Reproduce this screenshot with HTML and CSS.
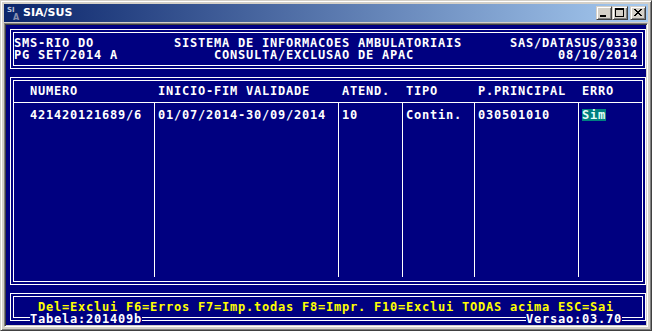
FILE: index.html
```html
<!DOCTYPE html>
<html lang="pt">
<head>
<meta charset="utf-8">
<title>SIA/SUS</title>
<link rel="stylesheet" href="styles.css">
</head>
<body>
<div class="window">
  <div class="titlebar">
    <svg class="app-icon" width="16" height="16" viewBox="0 0 16 16">
      <text x="1" y="7" class="ico-si">SI</text>
      <text x="7" y="15" class="ico-a">A</text>
    </svg>
    <span class="title">SIA/SUS</span>
    <div class="buttons">
      <div class="btn">
        <svg width="14" height="12" viewBox="0 0 14 12" shape-rendering="crispEdges"><rect x="3" y="8" width="6" height="2"/></svg>
      </div>
      <div class="btn">
        <svg width="14" height="12" viewBox="0 0 14 12" shape-rendering="crispEdges"><rect x="2" y="1" width="9" height="2"/><rect x="2" y="1" width="1" height="9"/><rect x="10" y="1" width="1" height="9"/><rect x="2" y="9" width="9" height="1"/></svg>
      </div>
      <div class="btn btn-close">
        <svg width="14" height="12" viewBox="0 0 14 12" shape-rendering="crispEdges">
          <rect x="3" y="2" width="2" height="1"/><rect x="9" y="2" width="2" height="1"/>
          <rect x="4" y="3" width="2" height="1"/><rect x="8" y="3" width="2" height="1"/>
          <rect x="5" y="4" width="4" height="1"/>
          <rect x="6" y="5" width="2" height="1"/>
          <rect x="5" y="6" width="4" height="1"/>
          <rect x="4" y="7" width="2" height="1"/><rect x="8" y="7" width="2" height="1"/>
          <rect x="3" y="8" width="2" height="1"/><rect x="9" y="8" width="2" height="1"/>
        </svg>
      </div>
    </div>
  </div>
  <div class="client">
    <div class="console">
      <section class="box">
        <div class="inner header">
          <span>SMS-RIO DO</span><span class="mid">SISTEMA DE INFORMACOES AMBULATORIAIS</span><span class="right">SAS/DATASUS/0330</span>
          <span>PG SET/2014 A</span><span class="mid">CONSULTA/EXCLUSAO DE APAC</span><span class="right">08/10/2014</span>
        </div>
      </section>
      <section class="box">
        <div class="inner apac">
          <div class="th first">NUMERO</div>
          <div class="th">INICIO-FIM VALIDADE</div>
          <div class="th">ATEND.</div>
          <div class="th">TIPO</div>
          <div class="th">P.PRINCIPAL</div>
          <div class="th">ERRO</div>
          <div class="td first">421420121689/6</div>
          <div class="td">01/07/2014-30/09/2014</div>
          <div class="td">10</div>
          <div class="td">Contin.</div>
          <div class="td">030501010</div>
          <div class="td"><span class="hl">Sim</span></div>
        </div>
      </section>
      <section class="box footer">
        <div class="inner keys">Del=Exclui F6=Erros F7=Imp.todas F8=Impr. F10=Exclui TODAS acima ESC=Sai</div>
        <span class="label label-left">Tabela:201409b</span>
        <span class="label label-right">Versao:03.70</span>
      </section>
    </div>
  </div>
</div>
</body>
</html>
```
FILE: styles.css
```css
* {
  box-sizing: border-box;
  margin: 0;
  padding: 0;
}

html, body {
  width: 652px;
  height: 331px;
  overflow: hidden;
  background: #d4d0c8;
}

.window {
  width: 652px;
  height: 331px;
  background: #d4d0c8;
  border: 1px solid;
  border-color: #d4d0c8 #404040 #404040 #d4d0c8;
  box-shadow: inset 1px 1px 0 #ffffff, inset -1px -1px 0 #808080;
  padding: 3px;
  display: flex;
  flex-direction: column;
}

.titlebar {
  height: 18px;
  flex: none;
  margin-bottom: 1px;
  background: linear-gradient(to right, #0a246a, #a6caf0);
  display: flex;
  align-items: center;
  padding: 0 2px;
}

.app-icon {
  flex: none;
  display: block;
}

.ico-si {
  font: bold 7px "DejaVu Sans", sans-serif;
  fill: #b8c0d8;
}

.ico-a {
  font: bold 8px "DejaVu Sans", sans-serif;
  fill: #8890b0;
}

.title {
  margin-left: 1px;
  color: #ffffff;
  font: bold 11px "DejaVu Sans", sans-serif;
  line-height: 18px;
}

.buttons {
  margin-left: auto;
  display: flex;
}

.btn {
  width: 16px;
  height: 14px;
  background: #d4d0c8;
  border: 1px solid;
  border-color: #d4d0c8 #404040 #404040 #d4d0c8;
  box-shadow: inset 1px 1px 0 #ffffff, inset -1px -1px 0 #808080;
}

.btn svg {
  display: block;
  fill: #000000;
}

.btn-close {
  margin-left: 2px;
}

.client {
  width: 644px;
  height: 304px;
  flex: none;
  border: 1px solid;
  border-color: #808080 #ffffff #ffffff #808080;
  box-shadow: inset 1px 1px 0 #404040, inset -1px -1px 0 #d4d0c8;
  padding: 1px;
}

.console {
  width: 640px;
  height: 300px;
  overflow: hidden;
  background: #000080;
  color: #ffffff;
  font-family: "DejaVu Sans Mono", monospace;
  font-weight: bold;
  font-size: 12px;
  letter-spacing: 0.776px;
  line-height: 12px;
  white-space: nowrap;
  padding: 4px 0 0 4px;
  display: flex;
  flex-direction: column;
  gap: 8px;
}

.box {
  width: 636px;
  flex: none;
  border: 1px solid #ffffff;
  padding: 2px;
}

.inner {
  border: 1px solid #ffffff;
  padding: 4px 0;
}

.header {
  display: grid;
  grid-template-columns: 160px 280px 184px;
  grid-auto-rows: 12px;
}

.header .mid {
  text-align: center;
}

.header .right {
  text-align: right;
}

.apac {
  display: grid;
  grid-template-columns: 140px 184px 64px 72px 104px 64px;
  grid-template-rows: 17px 175px;
}

.th {
  padding-left: 4px;
}

.td {
  border-top: 1px solid #ffffff;
  border-left: 1px solid #ffffff;
  padding: 6px 0 0 3px;
}

.th.first,
.td.first {
  padding-left: 16px;
  border-left: none;
}

.hl {
  display: inline-block;
  vertical-align: top;
  height: 12px;
  background: #008080;
  color: #e8fff8;
}

.footer {
  position: relative;
}

.keys {
  height: 22px;
  color: #ffff00;
  padding-left: 24px;
}

.label {
  position: absolute;
  top: 19px;
  height: 12px;
  background: #000080;
  color: #ffffff;
}

.label-left {
  left: 19px;
}

.label-right {
  right: 23px;
}
```
